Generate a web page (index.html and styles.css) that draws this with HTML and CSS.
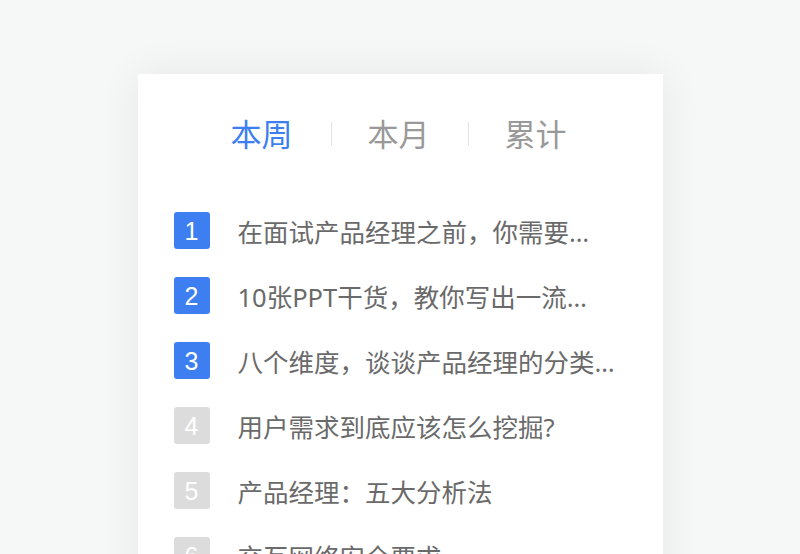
FILE: index.html
```html
<!DOCTYPE html>
<html lang="zh-CN">
<head>
  <meta charset="UTF-8">
  <title>热门排行</title>
  <meta name="viewport" content="width=device-width, initial-scale=1.0">
  <link rel="stylesheet" href="styles.css">
</head>
<body>
  <!-- Ranking card -->
  <div class="rank-card">
    <ul class="rank-tabs">
      <li class="active">本周</li>
      <li class="sep"></li>
      <li>本月</li>
      <li class="sep"></li>
      <li>累计</li>
    </ul>

    <ol class="rank-list">
      <li class="rank-item top">
        <span class="rank-num">1</span>
        <span class="rank-title">在面试产品经理之前，你需要…</span>
      </li>
      <li class="rank-item top">
        <span class="rank-num">2</span>
        <span class="rank-title">10张PPT干货，教你写出一流…</span>
      </li>
      <li class="rank-item top">
        <span class="rank-num">3</span>
        <span class="rank-title">八个维度，谈谈产品经理的分类…</span>
      </li>
      <li class="rank-item">
        <span class="rank-num">4</span>
        <span class="rank-title">用户需求到底应该怎么挖掘?</span>
      </li>
      <li class="rank-item">
        <span class="rank-num">5</span>
        <span class="rank-title">产品经理：五大分析法</span>
      </li>
      <li class="rank-item">
        <span class="rank-num">6</span>
        <span class="rank-title">交互网络安全要求</span>
      </li>
    </ol>
  </div>
</body>
</html>
```

FILE: styles.css
```css
/* ====== RESET ====== */
* {
  margin: 0;
  padding: 0;
  box-sizing: border-box;
}
ul, ol {
  list-style: none;
}

/* ====== PAGE ====== */
body {
  font-family: "Noto Sans", "Noto Sans CJK SC", sans-serif;
  background-color: #f6f8f8;
  height: 554px;
  overflow: hidden;
}

/* ====== CARD ====== */
.rank-card {
  width: 525px;
  margin: 74px auto 0;
  padding: 40px 30px 0 36px;
  background-color: #fff;
  box-shadow: 0 0 40px rgba(0, 0, 0, 0.07);
  min-height: 600px;
}

/* ====== TABS ====== */
.rank-tabs {
  display: flex;
  justify-content: center;
  align-items: center;
  height: 40px;
  margin-left: -9px;
}
.rank-tabs li {
  font-size: 31px;
  line-height: 40px;
  color: #999;
}
.rank-tabs li.active {
  color: #3d7ff0;
}
.rank-tabs .sep {
  width: 1px;
  height: 24px;
  margin: 0 36px 0 38px;
  background-color: #e3e3e3;
}

/* ====== LIST ====== */
.rank-list {
  margin-top: 44px;
}
.rank-item {
  display: flex;
  align-items: center;
  height: 65px;
}
.rank-num {
  flex: none;
  width: 36px;
  height: 37px;
  margin-right: 28px;
  border-radius: 3px;
  background-color: #dcdcdc;
  color: #fff;
  font-family: "Liberation Sans", sans-serif;
  font-size: 25px;
  line-height: 38px;
  text-align: center;
}
.rank-item.top .rank-num {
  background-color: #3d7ff0;
}
.rank-title {
  flex: 1;
  min-width: 0;
  font-size: 25.5px;
  color: #6a6a6a;
  white-space: nowrap;
  overflow: hidden;
  text-overflow: ellipsis;
}
```
